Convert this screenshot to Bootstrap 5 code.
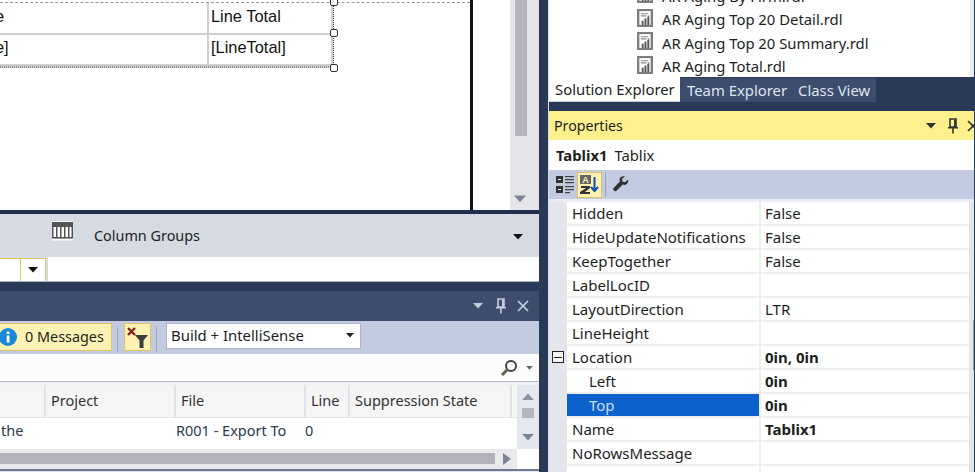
<!DOCTYPE html>
<html lang="en">
<head>
<meta charset="utf-8">
<title>Report designer</title>
<link rel="stylesheet" href="https://cdn.jsdelivr.net/npm/bootstrap@5.3.0/dist/css/bootstrap.min.css">
<style>
html,body{height:472px;overflow:hidden;background:#e9ebf0}
body{font:14.2px/20px "Noto Sans",sans-serif;color:#1e1e1e}
.shell{height:472px;width:975px;overflow:hidden;background:#293a56}
.leftcol{width:539px;height:472px;background:#dfe3ec}
.rightcol{width:426px;margin-left:9px;border-left:1px solid #d8dce6;height:472px}
.designer{height:210px;background:#fff}
.canvas{width:510px;height:210px}
.surface-end{left:470px;top:0;width:3px;height:210px;background:#111}
.page-edge{left:0;top:2px;width:470px;border-top:1px dashed #999}
.rdl-wrap{left:0;top:3px;width:334px;font:16.4px/20px "Liberation Sans",sans-serif;color:#111}
.rdl-table{width:333px;table-layout:fixed;border-collapse:collapse;margin:0}
.rdl-table td{height:31px;border:2px solid #cfcfcf;border-left:0;border-top:0;padding:0 0 5px 2px;overflow:hidden;white-space:nowrap}
.rdl-table .cut{width:208px;padding-left:0;text-indent:-5px}
.sel-bottom{left:0;top:63px;width:334px;height:2px;background:repeating-linear-gradient(90deg,#888 0 1px,#ddd 1px 2px)}
.sel-right{left:333px;top:-1px;width:1px;height:65px;background:repeating-linear-gradient(180deg,#333 0 1px,#fff 1px 2px)}
.grip{width:8px;height:8px;border:1px solid #333;background:#fff;border-radius:2px;left:330px}
.grip-a{top:-5px}.grip-b{top:26px}.grip-c{top:61px}
.vscroll{width:30px;height:210px;background:#e5e5ea}
.vthumb{width:12px;height:136px;background:#b5b5bd;margin-left:5px}
.vdown{left:4px;top:195px}
.dark-a{height:4px;background:#1f2e4a}
.groups{height:43px;background:#d6dae3}
.groups-icon{margin:6px 0 0 52px}
.groups-text{margin:0 0 0 20px;padding-top:12px;color:#222;font-size:14.4px}
.groups-arrow{left:513px;top:20px}
.combo-row{height:25px;background:#d6dae3;border-bottom:1px solid #aab1c4}
.combo-yel{width:46px;margin-top:1px;background:#fff;border:1px solid #e5c365;border-left:0;border-bottom:0}
.combo-sep{width:21px;border-right:1px solid #e5c365}
.combo-arrow{margin:8px 0 0 7px}
.combo-rest{margin-left:2px;background:#fff}
.gap-a{height:9px;background:#293a56}
.tw-title{height:30px;background:#3c4d6e;color:#c6cede;padding-right:10px}
.tw-arrow{margin-right:12px}
.tw-pin{margin-right:10px}
.tw-tools{height:33px;background:#c2cbdf;padding-top:2px}
.msg-btn{width:113px;height:28px;margin-left:-1px;background:#fdf2b3;border:1px solid #e5c365;padding-left:0}
.msg-text{margin-left:8px;font-size:14.4px}
.tool-sep{width:1px;height:25px;background:#9aa3b5;margin:0 6px 0 5px}
.flt-btn{width:27px;height:28px;background:#fdf2b3;border:1px solid #e5c365}
.build-box{width:195px;height:26px;background:#fff;border:1px solid #aab4cc;margin-left:3px;padding:0 5px 2px 4px;font-size:14.9px}
.search-row{height:28px;background:#fcfcfc;border-bottom:1px solid #b3bcd2;padding-right:6px}
.gridgap{height:3px;background:#f0f1f5}
.errwrap{height:64px;background:#fff}
.errmain{width:517px}
.errhead{height:33px;background:#f5f5f5;border-bottom:1px solid #e4e6ee;color:#333;font-size:14.5px}
.ec{height:100%;border-right:2px solid #dfe2ea;padding:5px 0 0 5px}
.ec-a{width:46px;padding:0}.ec-b{width:130px}.ec-c{width:130px}.ec-d{width:44px}.ec-e{width:162px}
.errcell{height:30px;overflow:hidden;line-height:23px;color:#2c3a4f;padding-top:1px;font-size:14.5px}
.ed-a{width:48px;text-indent:1px}.ed-b{width:127px}.ed-c{width:130px;margin-right:0;padding-left:1px}.ed-d{width:20px}
.errv{width:22px;background:#e5e7ee}
.err-up{color:#8e93a8;transform:rotate(180deg)}
.err-down{color:#7c8198}
.err-mid{width:12px;height:10px;background:#b5b5bd}
.hbar{height:20px;background:#e9eaee}
.hbar-main{width:517px;padding-top:4px}
.hthumb{width:495px;height:11px;background:#b3b3bb}
.hcorner{width:22px;background:#fff}
.tw-bottom{height:2px;background:#6e7a94}
.sol{height:77px;background:#fff;font-size:14.85px}
.sol-main{width:421px;overflow:hidden;padding:0 0 0 88px;margin-top:-15.5px}
.sol-row{height:23.5px;line-height:23.5px;white-space:nowrap}
.sol-ico{margin-bottom:4px}
.sol-text{margin-left:9px}
.sol-track{width:5px;background:#e9e9ee}
.tabstrip{height:26px;background:#293a56;color:#dfe4ee;font-size:14.85px}
.tab-on{width:131px;height:25px;background:#fff;color:#1e1e1e;padding-left:6px;line-height:25px;border-bottom:1px solid #c2cbdf}
.tabs-off{height:24px;margin-top:1px;width:196px;background:#3c4d6e;line-height:25px;padding-left:7px}
.tab-gap{margin-left:11px}
.gap-b{height:8px;background:#293a56}
.prop-title{height:29px;background:#fff08e;padding-left:5px;overflow:hidden}
.prop-arrow{margin-left:auto;color:#333}
.prop-pin{margin-left:11px;color:#333}
.prop-x{margin:0 -5px 0 8px;color:#333}
.prop-obj{height:30px;background:#fff;padding-left:7px;font-size:14.8px}
.prop-kind{margin-left:7px}
.prop-tools{height:29px;background:#c2cbdf;padding-left:7px}
.sort-btn{width:25px;height:26px;background:#fdf2b3;border:1px solid #e5c365;margin-left:2px}
.prop-sep{width:1px;height:25px;background:#9aa3b5;margin:0 7px 0 3px}
.prop-top{height:3px;background:#e9ecf3}
.prop-body{background:#e5e6ec;font-size:15px}
.gutter{width:18px;padding-top:149px}
.minus-box{width:12px;height:12px;margin-left:3px;border:1px solid #222;background:#f4f4f6}
.minus-box i{display:block;width:8px;height:1px;margin:4.5px 1px 0;background:#222}
.prop-grid{width:402px;background:#fff}
.prow{height:24px;border-bottom:2px solid #eeeeee}
.pname{width:194px;padding:1px 0 0 5px;border-right:2px solid #eeeeee;line-height:21px}
.pname.sub{padding-left:22px}
.pname.on{background:#0c62cc;color:#c9dcf5}
.pval{padding:1px 0 0 4px;line-height:21px}
.prop-scroll{width:6px;position:relative}
.prop-thumb{right:0;top:118px;width:1px;height:50px;background:#999}
</style>
</head>
<body>
<svg width="0" height="0" class="position-absolute">
  <symbol id="rep" viewBox="0 0 17 17" preserveAspectRatio="none">
    <rect width="17" height="17" fill="#7d7d7d"/>
    <path d="M2.500 2h12v13h-12z" fill="#fff"/>
    <path d="M4 4h8v1H4zM4 6h6v1H4zM12 6h1v2h-1z" fill="#8a8a8a"/>
    <path d="M5 11h2v4H5zM8 9h2v6H8zM11 7h2v8h-2z" fill="#555"/>
  </symbol>
  <symbol id="pin" viewBox="0 0 12 16">
    <path d="M3 1h6v8H3z" fill="none" stroke="currentColor" stroke-width="1.6"/>
    <path d="M7 2h2v7H7zM1 9h10v1.500H1zM5.200 10h1.600v5.500H5.200z" fill="currentColor"/>
  </symbol>
  <symbol id="xic" viewBox="0 0 12 12">
    <path d="M1 1l10 10M11 1L1 11" stroke="currentColor" stroke-width="1.700" fill="none"/>
  </symbol>
  <symbol id="tri" viewBox="0 0 10 6"><path d="M0 0h10L5 5.500z" fill="currentColor"/></symbol>
</svg>

<div class="shell d-flex">
  <div class="leftcol d-flex flex-column flex-shrink-0 overflow-hidden">
    <div class="designer d-flex flex-shrink-0">
      <div class="canvas position-relative flex-shrink-0 overflow-hidden">
        <div class="page-edge position-absolute"></div>
        <div class="surface-end position-absolute"></div>
        <div class="rdl-wrap position-absolute">
          <table class="rdl-table">
            <tr><td class="cut">e</td><td>Line Total</td></tr>
            <tr><td class="cut">e]</td><td>[LineTotal]</td></tr>
          </table>
          <div class="sel-bottom position-absolute"></div>
          <div class="sel-right position-absolute"></div>
          <div class="grip grip-a position-absolute"></div>
          <div class="grip grip-b position-absolute"></div>
          <div class="grip grip-c position-absolute"></div>
        </div>
      </div>
      <div class="vscroll position-relative flex-shrink-0">
        <div class="vthumb"></div>
        <svg class="vdown position-absolute" width="12" height="8" style="color:#7c8198"><use href="#tri"/></svg>
      </div>
    </div>
    <div class="dark-a flex-shrink-0"></div>
    <div class="groups position-relative d-flex flex-shrink-0">
      <svg class="groups-icon" width="22" height="22" viewBox="0 0 22 22">
        <path d="M0 1h21v1H0z" fill="#fff"/>
        <path d="M0 2h21v5H0z" fill="#555"/>
        <path d="M0 7h21v11H0z" fill="#fff"/>
        <path d="M0 7h1.500v11H0zM4 7h1.500v11H4zM8 7h1.500v11H8zM12 7h1.500v11H12zM16 7h1.500v11H16zM19.500 7H21v11h-1.500zM0 17h21v1.500H0z" fill="#555"/>
        <path d="M0 19h21v1.500H0z" fill="#fff"/>
      </svg>
      <div class="groups-text">Column Groups</div>
      <svg class="groups-arrow position-absolute" width="10" height="6" style="color:#111"><use href="#tri"/></svg>
    </div>
    <div class="combo-row d-flex flex-shrink-0">
      <div class="combo-yel d-flex flex-shrink-0">
        <div class="combo-sep"></div>
        <svg class="combo-arrow" width="10" height="6" style="color:#111"><use href="#tri"/></svg>
      </div>
      <div class="combo-rest flex-grow-1"></div>
    </div>
    <div class="gap-a flex-shrink-0"></div>
    <div class="tw-title d-flex align-items-center justify-content-end flex-shrink-0">
      <svg class="tw-arrow" width="10" height="6"><use href="#tri"/></svg>
      <svg class="tw-pin" width="12" height="16"><use href="#pin"/></svg>
      <svg width="12" height="12"><use href="#xic"/></svg>
    </div>
    <div class="tw-tools d-flex align-items-start flex-shrink-0">
      <div class="msg-btn d-flex align-items-center flex-shrink-0">
        <svg width="18" height="18" viewBox="0 0 18 18" style="margin-left:-1px" class="flex-shrink-0">
          <circle cx="9" cy="9" r="9" fill="#1b87d8"/>
          <rect x="7.700" y="7.500" width="2.800" height="7" fill="#fff"/>
          <rect x="7.700" y="3.500" width="2.800" height="2.600" fill="#fff"/>
        </svg>
        <span class="msg-text">0 Messages</span>
      </div>
      <div class="tool-sep mt-1"></div>
      <div class="flt-btn flex-shrink-0">
        <svg width="25" height="26" viewBox="0 0 25 26">
          <path d="M3 4l7 7M10 4l-7 7" stroke="#8c1c1c" stroke-width="2.400"/>
          <path d="M10 11h13l-4.500 5.500V24h-4v-7.500z" fill="#3d3d3d"/>
        </svg>
      </div>
      <div class="tool-sep mt-1"></div>
      <div class="build-box d-flex align-items-center justify-content-between flex-shrink-0">
        <span>Build + IntelliSense</span>
        <svg width="8" height="5" style="color:#222;margin-right:1px"><use href="#tri"/></svg>
      </div>
    </div>
    <div class="search-row d-flex align-items-center justify-content-end flex-shrink-0 gap-2">
      <svg width="18" height="18" viewBox="0 0 18 18">
        <circle cx="11" cy="7" r="5" fill="none" stroke="#444" stroke-width="2"/>
        <path d="M7.500 10.500L2 16" stroke="#6b5f4f" stroke-width="3"/>
      </svg>
      <svg width="7" height="4" style="color:#666"><use href="#tri"/></svg>
    </div>
    <div class="gridgap flex-shrink-0"></div>
    <div class="errwrap d-flex flex-shrink-0">
      <div class="errmain flex-shrink-0">
        <div class="errhead d-flex">
          <div class="ec ec-a flex-shrink-0"></div>
          <div class="ec ec-b flex-shrink-0">Project</div>
          <div class="ec ec-c flex-shrink-0">File</div>
          <div class="ec ec-d flex-shrink-0">Line</div>
          <div class="ec ec-e flex-shrink-0">Suppression State</div>
        </div>
        <div class="errcell d-flex">
          <div class="ed-a flex-shrink-0">the<br>rule</div>
          <div class="ed-b flex-shrink-0"></div>
          <div class="ed-c flex-shrink-0">R001 - Export To<br>Excel Store.rdl</div>
          <div class="ed-d flex-shrink-0">0</div>
        </div>
      </div>
      <div class="errv d-flex flex-column align-items-center flex-shrink-0 pt-2">
        <svg class="err-up" width="12" height="7"><use href="#tri"/></svg>
        <div class="err-mid my-2"></div>
        <svg class="err-down mt-2" width="12" height="7"><use href="#tri"/></svg>
      </div>
    </div>
    <div class="hbar d-flex flex-shrink-0">
      <div class="hbar-main d-flex flex-shrink-0">
        <div class="hthumb"></div>
        <svg class="ms-2" width="8" height="12" viewBox="0 0 8 12" style="color:#7c8198"><path d="M0 0l8 6-8 6z" fill="currentColor"/></svg>
      </div>
      <div class="hcorner flex-grow-1"></div>
    </div>
    <div class="tw-bottom flex-shrink-0"></div>
  </div>

  <div class="rightcol d-flex flex-column flex-shrink-0 overflow-hidden">
    <div class="sol d-flex flex-shrink-0 overflow-hidden">
      <div class="sol-main flex-shrink-0">
        <div class="sol-row d-flex align-items-center"><svg width="16" height="18" class="sol-ico flex-shrink-0"><use href="#rep" width="16" height="18"/></svg><span class="sol-text">AR Aging By Firm.rdl</span></div>
        <div class="sol-row d-flex align-items-center"><svg width="16" height="18" class="sol-ico flex-shrink-0"><use href="#rep" width="16" height="18"/></svg><span class="sol-text">AR Aging Top 20 Detail.rdl</span></div>
        <div class="sol-row d-flex align-items-center"><svg width="16" height="18" class="sol-ico flex-shrink-0"><use href="#rep" width="16" height="18"/></svg><span class="sol-text">AR Aging Top 20 Summary.rdl</span></div>
        <div class="sol-row d-flex align-items-center"><svg width="16" height="18" class="sol-ico flex-shrink-0"><use href="#rep" width="16" height="18"/></svg><span class="sol-text">AR Aging Total.rdl</span></div>
      </div>
      <div class="sol-track flex-grow-1"></div>
    </div>
    <div class="tabstrip d-flex flex-shrink-0">
      <div class="tab-on flex-shrink-0">Solution Explorer</div>
      <div class="tabs-off flex-shrink-0"><span>Team Explorer</span><span class="tab-gap">Class View</span></div>
    </div>
    <div class="gap-b flex-shrink-0"></div>
    <div class="prop-title d-flex align-items-center flex-shrink-0">
      <span>Properties</span>
      <svg class="prop-arrow flex-shrink-0" width="10" height="6"><use href="#tri"/></svg>
      <svg class="prop-pin flex-shrink-0" width="12" height="16"><use href="#pin"/></svg>
      <svg class="prop-x flex-shrink-0" width="12" height="12"><use href="#xic"/></svg>
    </div>
    <div class="prop-obj d-flex align-items-center flex-shrink-0"><span class="fw-bold">Tablix1</span><span class="prop-kind">Tablix</span></div>
    <div class="prop-tools d-flex align-items-center flex-shrink-0">
      <svg width="19" height="19" viewBox="0 0 19 19" class="flex-shrink-0">
        <rect x="0" y="1" width="7" height="7" fill="#333"/><rect x="0" y="11" width="7" height="7" fill="#333"/>
        <path d="M2 4h3v1H2zM2 14h3v1H2z" fill="#fff"/>
        <path d="M9 1h9v1.300H9zM9 4h9v1.300H9zM9 7h9v1.300H9zM9 11h9v1.300H9zM9 14h9v1.300H9zM9 17h5v1.300H9z" fill="#444"/>
      </svg>
      <div class="sort-btn flex-shrink-0 d-flex align-items-center justify-content-center">
        <svg width="21" height="21" viewBox="0 0 21 21">
          <rect x="1" y="1" width="11" height="9" fill="#666"/>
          <text x="6.500" y="9" font-size="9" font-weight="700" text-anchor="middle" fill="#fdf2b3" font-family="Liberation Sans">A</text>
          <path d="M2 12h9v2l-5 4h5v2H1v-2l6-4H2z" fill="#333"/>
          <path d="M15.500 3v14M12 13l3.500 4 3.500-4" stroke="#0e4fa8" stroke-width="2" fill="none"/>
        </svg>
      </div>
      <div class="prop-sep"></div>
      <svg width="16" height="17" viewBox="0 0 16 17" class="flex-shrink-0">
        <path d="M15 3.500l-3 2.700-2.500-.8-.4-2.500L11.800.5C9.800-.2 7.500.6 6.800 2.600c-.4 1-.3 2 .1 2.900L1 11.500c-1 1-1 2.200-.2 3.100s2.200 1 3.100 0l5.900-6c1 .5 2.200.5 3.200 0 1.700-.9 2.500-3 2-5.100z" fill="#333"/>
      </svg>
    </div>
    <div class="prop-top flex-shrink-0"></div>
    <div class="prop-body d-flex flex-grow-1 overflow-hidden">
      <div class="gutter flex-shrink-0"><div class="minus-box"><i></i></div></div>
      <div class="prop-grid flex-shrink-0">
        <div class="prow d-flex"><div class="pname flex-shrink-0">Hidden</div><div class="pval">False</div></div>
        <div class="prow d-flex"><div class="pname flex-shrink-0">HideUpdateNotifications</div><div class="pval">False</div></div>
        <div class="prow d-flex"><div class="pname flex-shrink-0">KeepTogether</div><div class="pval">False</div></div>
        <div class="prow d-flex"><div class="pname flex-shrink-0">LabelLocID</div><div class="pval"></div></div>
        <div class="prow d-flex"><div class="pname flex-shrink-0">LayoutDirection</div><div class="pval">LTR</div></div>
        <div class="prow d-flex"><div class="pname flex-shrink-0">LineHeight</div><div class="pval"></div></div>
        <div class="prow d-flex"><div class="pname flex-shrink-0">Location</div><div class="pval fw-bold">0in, 0in</div></div>
        <div class="prow d-flex"><div class="pname sub flex-shrink-0">Left</div><div class="pval fw-bold">0in</div></div>
        <div class="prow d-flex"><div class="pname sub on flex-shrink-0">Top</div><div class="pval fw-bold">0in</div></div>
        <div class="prow d-flex"><div class="pname flex-shrink-0">Name</div><div class="pval fw-bold">Tablix1</div></div>
        <div class="prow d-flex"><div class="pname flex-shrink-0">NoRowsMessage</div><div class="pval"></div></div>
        <div class="prow d-flex"><div class="pname flex-shrink-0"></div><div class="pval"></div></div>
      </div>
      <div class="prop-scroll flex-grow-1"><div class="prop-thumb position-absolute"></div></div>
    </div>
  </div>
</div>
</body>
</html>
